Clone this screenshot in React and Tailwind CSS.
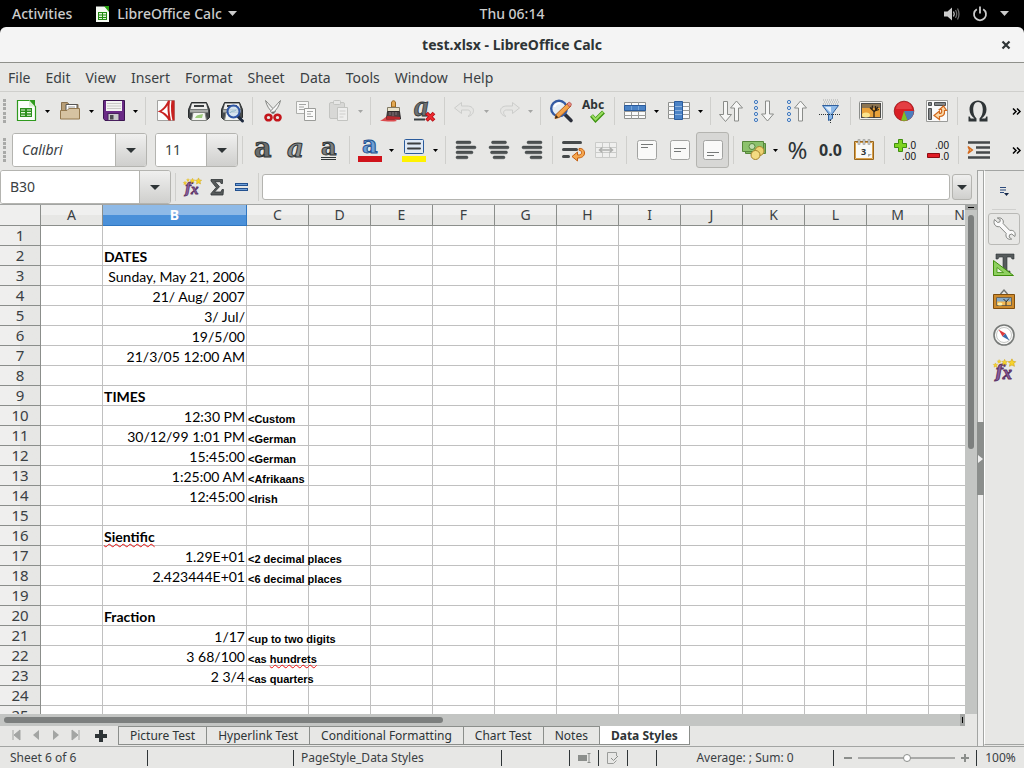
import React from 'react';

/* ---------- shared pieces ---------- */

const Svg = ({ w = 24, h = 24, children, className = '' }) => (
  <svg width={w} height={h} viewBox={`0 0 ${w} ${h}`} className={`shrink-0 overflow-visible ${className}`} aria-hidden="true">
    {children}
  </svg>
);

const Tool = ({ label, active, children }) => (
  <button
    type="button"
    aria-label={label}
    className={
      active
        ? 'flex h-9 w-[33px] shrink-0 items-center justify-center rounded-[3px] border border-[#b4b4b0] bg-[#d7d7d5]'
        : 'flex h-9 w-[33px] shrink-0 items-center justify-center'
    }
  >
    {children}
  </button>
);

const Caret = ({ label, dim }) => (
  <button type="button" aria-label={label} className="flex h-9 w-[11px] shrink-0 items-center justify-center">
    <Svg w={5} h={3}>
      <path d="M0 0h5L2.5 3z" fill={dim ? '#a5a6a4' : '#000'} />
    </Svg>
  </button>
);

const Sep = () => (
  <span className="flex h-9 w-2 shrink-0 items-center justify-center">
    <span className="h-7 w-px bg-[#cfcfcc]" />
  </span>
);

const Grip = () => (
  <span className="flex h-6 w-[3px] shrink-0 flex-col justify-between">
    {[0, 1, 2, 3, 4, 5].map((i) => (
      <span key={i} className="h-[3px] w-[3px] bg-[#a9aaa8]" />
    ))}
  </span>
);

const More = () => (
  <button type="button" aria-label="More tools" className="ml-auto flex h-9 w-4 shrink-0 items-center justify-center">
    <Svg w={9} h={7}>
      <path d="M1 .5l3 3-3 3M5 .5l3 3-3 3" fill="none" stroke="#000" strokeWidth="1.500" />
    </Svg>
  </button>
);

const DropArrow = () => (
  <Svg w={10} h={5}>
    <path d="M0 0h10L5 5z" fill="#2e3436" />
  </Svg>
);

/* ---------- standard toolbar icons ---------- */

const NewDoc = () => (
  <Svg>
    <path d="M3.5 1.5h12l6 6v14h-18z" fill="#fcfdfb" stroke="#2f9a1e" strokeWidth="1.2" />
    <path d="M14.5 1h6.5v6.5z" fill="#2f9a1e" />
    <path d="M15 1l6 6.5h-6z" fill="#d9efd2" />
    <rect x="6" y="9" width="12" height="9" fill="#2c8f1c" />
    <path d="M7 10.5h4v1h-4zM13 10.5h4v1h-4zM7 13h4v1.3h-4zM13 13h4v1.3h-4zM7 15.7h4v1h-4zM13 15.7h4v1h-4z" fill="#e6f5e0" />
  </Svg>
);

const OpenFolder = () => (
  <Svg>
    <path d="M3.5 7V3.5h6l1.500 2h9V17h-16.500z" fill="#b89f78" stroke="#8a7250" />
    <path d="M8 5.500h11v8H8z" fill="#fff" stroke="#555" />
    <path d="M10 8h7M10 10h7" stroke="#999" />
    <path d="M2.500 11.500h6.500l2-2h10.500v10.500h-19z" fill="#d6c3a2" stroke="#94794f" />
  </Svg>
);

const Save = () => (
  <Svg>
    <path d="M1.500 1.500h21v20h-19.500l-1.500-2z" fill="#6a2a86" stroke="#3b1450" />
    <rect x="4" y="2" width="16" height="10" fill="#f3f3f1" />
    <path d="M5 4.500h14M5 7h14M5 9.500h14" stroke="#c9c9c6" />
    <rect x="6" y="14.500" width="11" height="7" fill="#c9c9cb" stroke="#49205e" />
    <rect x="8" y="16" width="3.500" height="4.500" fill="#4b4b4f" />
  </Svg>
);

const Pdf = () => (
  <Svg>
    <path d="M3.500 1.500h17v20h-17z" fill="#fbfbfb" stroke="#a3a3a1" />
    <path d="M17.500 1.500h3v20h-2c-1.500-6-2-13-1-20z" fill="#c8201f" />
    <path d="M3.500 12.500C8 11 11.500 7 14 1.500h2c-1 7-.5 13 1 20h-2.500C12 17 8 13.500 3.500 12.500z" fill="#c8201f" />
    <path d="M7.500 12.200c2.500-1.200 4.500-3.200 6-6-.1 3.800.1 7.300.7 11-1.700-2.300-4-4-6.700-5z" fill="#fff" />
  </Svg>
);

const PrinterBody = () => (
  <>
    <path d="M4.500 3.500h15l3 7v8l-2 2h-17l-2-2v-8z" fill="#45494b" stroke="#2a2d2e" />
    <path d="M5 4.500h14l1.500 5.500h-17z" fill="#eeeeec" />
    <path d="M7 6h10v2H7z" fill="#3b3e40" />
    <path d="M3 10.500h18v3H3z" fill="#a9aca9" />
    <path d="M6 13.500h12l1.500 8h-15z" fill="#f4f6f3" stroke="#828581" />
  </>
);

const Print = () => (
  <Svg>
    <PrinterBody />
    <path d="M8 19c2-4 5-3 8-4l-1 4z" fill="#9ccb7c" />
  </Svg>
);

const Preview = () => (
  <Svg>
    <PrinterBody />
    <path d="M18 17.500l4.500 4.500" stroke="#1e2a3f" strokeWidth="3" strokeLinecap="round" />
    <circle cx="13.500" cy="12.500" r="6" fill="#cfe0ee" fillOpacity=".85" stroke="#2f56a5" strokeWidth="2" />
    <path d="M10 14c2-3 4-1 6-3" stroke="#89b6c9" fill="none" />
  </Svg>
);

const Cut = () => (
  <Svg>
    <path d="M4.500 1.500c1 5 4 10 8.500 13l1.500-2.500C11 9 8 5 4.500 1.500z" fill="#f1f1f0" stroke="#858784" />
    <path d="M19.500 1.500c-1 5-4 10-8.500 13l-1.500-2.500C13 9 16 5 19.500 1.500z" fill="#f8f8f8" stroke="#858784" />
    <ellipse cx="7.500" cy="18.500" rx="3" ry="2.800" fill="none" stroke="#c4161c" strokeWidth="2.600" />
    <ellipse cx="16.500" cy="18.500" rx="3" ry="2.800" fill="none" stroke="#c4161c" strokeWidth="2.600" />
    <circle cx="12" cy="13.500" r="1" fill="#666" />
  </Svg>
);

const Copy = () => (
  <Svg>
    <path d="M2.500 2.500h12v12h-12z" fill="#f7f7f6" stroke="#adaeab" />
    <path d="M5 5.500h7M5 8h5M5 10.500h6" stroke="#a4a5a3" />
    <path d="M10.500 9.500h11v12h-11z" fill="#fbfbfa" stroke="#9b9c99" />
    <path d="M13 12.500h6M13 15h4M13 17.500h6" stroke="#a4a5a3" />
  </Svg>
);

const Paste = () => (
  <Svg>
    <rect x="2.500" y="3.500" width="15" height="16" rx="1.500" fill="#d8d8d6" stroke="#c3c4c1" />
    <rect x="6.500" y="1.500" width="7" height="4" rx="1" fill="#e6e6e5" stroke="#c3c4c1" />
    <path d="M10.500 8.500h10v13h-10z" fill="#eeeeed" stroke="#c3c4c1" />
    <path d="M12.500 12h6M12.500 15h6M12.500 18h4" stroke="#cececc" />
  </Svg>
);

const Brush = () => (
  <Svg>
    <path d="M1 21.500c4-1 5-4 9-5l8 5.500c-5 1-12 .5-17-.5z" fill="#dc4a4d" />
    <path d="M12.500 8V4c0-3 4-3 4 0v4z" fill="#e3a953" stroke="#96641b" />
    <path d="M8.500 8.500h12v4h-12z" fill="#e9e3cb" stroke="#817a65" />
    <path d="M8.500 12.500h12l1 7.500h-14z" fill="#4d4143" stroke="#2e2829" />
    <path d="M8 17l13 1v2.500H7z" fill="#b8282c" />
    <path d="M11 13v3M14 13v4M17 13v3" stroke="#85777a" />
  </Svg>
);

const ClearFormat = () => (
  <Svg>
    <text x="2" y="17" fontSize="29" fontStyle="italic" fontWeight="bold" fontFamily="Liberation Serif, serif" fill="#6d7171" stroke="#2e3436" strokeWidth=".8">a</text>
    <path d="M2 20.500h11" stroke="#3b4042" strokeWidth="2" />
    <path d="M14.500 14l7.500 7.500M22 14l-7.500 7.500" stroke="#b40e14" strokeWidth="3.800" />
    <path d="M15 14.500l6.500 6.500M21.500 14.500L15 21" stroke="#ef2b31" strokeWidth="2" />
  </Svg>
);

const Undo = ({ flip }) => (
  <Svg>
    <path
      transform={flip ? 'translate(24 0) scale(-1 1)' : undefined}
      d="M8.500 3.500L1.500 9l7 5.500V11h6c3.500 0 4 4 .5 6.500 7-1.500 8-10.500-1-10.500H8.500z"
      fill="#e5e5e3"
      stroke="#cccdcb"
    />
  </Svg>
);

const Find = () => (
  <Svg>
    <path d="M15 14.500l7 7" stroke="#2b2f3a" strokeWidth="3.600" strokeLinecap="round" />
    <circle cx="10" cy="9.500" r="7.800" fill="#e5edf4" stroke="#335aa3" strokeWidth="2.400" />
    <path d="M5.500 8a5 5 0 016-3.500" stroke="#fff" strokeWidth="2" fill="none" />
    <path d="M6 19.500l1-4L19 4l3 3L10 18.500z" fill="#f3a34b" stroke="#b5611a" />
    <path d="M18 5l1.500-1.500c1-1 4 1.500 2.500 3L20.500 8z" fill="#e88980" stroke="#a74943" strokeWidth=".7" />
    <path d="M6 19.500l1-3.500 2.500 2.500z" fill="#3b2c1c" />
  </Svg>
);

const Spell = () => (
  <Svg w={26}>
    <text x="1" y="10" fontSize="12" fontWeight="bold" fontFamily="Noto Sans, sans-serif" fill="#2e3436">Abc</text>
    <path d="M10.500 16.500l4 4.500 8-8" fill="none" stroke="#3e9410" strokeWidth="4" />
    <path d="M11 16.500l3.500 4 7.500-7.500" fill="none" stroke="#9bdd61" strokeWidth="2" />
  </Svg>
);

const RowTable = () => (
  <Svg>
    <path d="M1.500 3.500h21v16h-21z" fill="#fafafa" stroke="#8d8f8d" />
    <path d="M8.500 3v17M15.500 3v17M1 12.500h22M1 16.500h22" stroke="#9a9c9a" />
    <path d="M1.500 6.500h21v5h-21z" fill="#4b83c6" stroke="#2a5b9c" />
    <path d="M8.500 7v4M15.500 7v4" stroke="#77a5da" />
  </Svg>
);

const ColTable = () => (
  <Svg>
    <path d="M1.500 3.500h21v16h-21z" fill="#fafafa" stroke="#8d8f8d" />
    <path d="M1 7.500h22M1 11.500h22M1 15.500h22" stroke="#9a9c9a" />
    <path d="M7.500 2.500h8v18h-8z" fill="#4b83c6" stroke="#2a5b9c" />
    <path d="M8 7.500h7M8 11.500h7M8 15.500h7" stroke="#8fb4e0" />
  </Svg>
);

const down = 'M-2 0h4v13h4L0 20l-6-7h4z';
const up = 'M-2 20h4V7h4L0 0l-6 7h4z';
const arrowStyle = { fill: '#f6f6f5', stroke: '#8a8c89', strokeWidth: 1 };

const Sort = () => (
  <Svg w={26}>
    <path d={down} transform="translate(7.500 2.500)" {...arrowStyle} />
    <path d={up} transform="translate(18.500 2)" {...arrowStyle} />
  </Svg>
);

const SortDir = ({ desc }) => (
  <Svg>
    {[3, 9, 15, 21].map((y) => (
      <circle key={y} cx="4" cy={y} r="1.600" fill="#dce8f5" stroke="#4078bd" />
    ))}
    <path d={desc ? up : down} transform="translate(15.500 2)" {...arrowStyle} />
  </Svg>
);

const Filter = () => (
  <Svg>
    <path d="M5 1h15M6 3h15M5 5h15" stroke="#a9aba9" strokeDasharray="1 1" />
    <path d="M4.500 6.500h16l-6 8v5l-4 2v-7z" fill="#8db9e8" stroke="#2f609f" />
    <path d="M7 8h6v6z" fill="#e2eefa" />
    <path d="M1 15.500h22M12.500 21v3" stroke="#2e3436" strokeDasharray="1 1" />
  </Svg>
);

const Picture = () => (
  <Svg w={26}>
    <rect x="1.500" y="2.500" width="23" height="18" rx="1" fill="#f2f2f0" stroke="#8b8d8a" />
    <rect x="3.500" y="4.500" width="19" height="14" fill="#e9a23a" stroke="#4b4b49" />
    <path d="M4 5h18v4H4z" fill="#8c7552" />
    <ellipse cx="8" cy="16" rx="4" ry="2.500" fill="#fbe48d" />
    <path d="M16 18.500v-6l-4-4M16 13l4-5M14 10l.5-3.500M17.500 10.500V7M18 11.500l3-1" stroke="#2e2417" strokeWidth="1.300" fill="none" />
  </Svg>
);

const Chart = () => (
  <Svg>
    <circle cx="12" cy="12" r="9.800" fill="#d81e24" stroke="#951014" strokeWidth=".8" />
    <path d="M12 12h9.800a9.800 9.800 0 01-6.300 9.200z" fill="#4c7dbd" />
    <path d="M12 12l3.500 9.200a10 10 0 01-6.500.2z" fill="#7cc32a" />
    <path d="M4 10a8 7 0 0116 0" fill="#f3666a" opacity=".45" />
  </Svg>
);

const Pivot = () => (
  <Svg>
    <path d="M1.500 1.500h21v21h-21z" fill="#fafafa" stroke="#9a9b99" />
    <path d="M3.500 3.500h3v3h-3zM9.500 3.500h11v3h-11zM3.500 9.500h3v11h-3z" fill="#85888a" stroke="#4d5052" />
    <path d="M14.500 10.500l4-3.500 3 4.500h-2c.5 4.500-1.500 6-5 6v3l-5.500-4 5.500-4.500v2.500c2 0 2.500-1 2-4z" fill="#fbd9a8" stroke="#d2691e" strokeWidth="1.200" />
  </Svg>
);

const Omega = () => (
  <Svg>
    <path d="M2.500 22.500v-5h1.200l1 2h3.800c-3-2.200-5-5-5-9C3.500 5 7 1.500 12 1.500s8.500 3.500 8.500 9c0 4-2 6.800-5 9h3.800l1-2h1.200v5h-8v-3c2.200-2 3.300-5 3.300-9 0-4-1.600-7.500-4.800-7.500S7.200 6.500 7.200 10.500c0 4 1.100 7 3.300 9v3z" fill="#2e3436" />
  </Svg>
);

/* ---------- formatting toolbar icons ---------- */

const LetterA = ({ variant }) => (
  <Svg>
    {variant === 'bold' && (
      <text x="3" y="19" fontSize="27" fontWeight="bold" fontFamily="DejaVu Serif, serif" fill="#6a6d6d" stroke="#2e3436">a</text>
    )}
    {variant === 'italic' && (
      <text x="3" y="19" fontSize="26" fontStyle="italic" fontWeight="bold" fontFamily="DejaVu Serif, serif" fill="#8a8d8d" stroke="#2e3436">a</text>
    )}
    {variant === 'underline' && (
      <>
        <text x="4" y="17" fontSize="24" fontWeight="bold" fontFamily="DejaVu Serif, serif" fill="#7c7f7f" stroke="#2e3436">a</text>
        <path d="M4 19.500h15M4 21.500h15" stroke="#2e3436" strokeWidth="1.200" />
      </>
    )}
  </Svg>
);

const FontColor = () => (
  <Svg>
    <text x="4" y="15" fontSize="24" fontWeight="bold" fontFamily="DejaVu Serif, serif" fill="#6d9fd6" stroke="#23518f">a</text>
    <rect y="18" width="24" height="6" fill="#d0131b" />
  </Svg>
);

const Highlight = () => (
  <Svg>
    <rect x="2.500" y="1.500" width="19" height="14" rx="1" fill="#dfe9f5" stroke="#2a5b9c" />
    <path d="M6 5.500h12M6 10.500h12" stroke="#3b3e40" strokeWidth="2" strokeLinecap="round" />
    <rect y="18" width="24" height="6" fill="#fff200" />
  </Svg>
);

const Align = ({ side }) => {
  const widths = [15, 20, 17, 12];
  return (
    <Svg>
      {widths.map((w, i) => {
        const x = side === 'left' ? 2 : side === 'right' ? 22 - w : 12 - w / 2;
        return <rect key={i} x={x} y={3 + i * 5} width={w} height="2.800" rx="1.400" fill="#4d5152" stroke="#2e3436" strokeWidth=".4" />;
      })}
    </Svg>
  );
};

const Wrap = () => (
  <Svg>
    <rect x="1" y="3" width="20" height="3" rx="1.500" fill="#45494a" />
    <rect x="1" y="10" width="16" height="3" rx="1.500" fill="#45494a" />
    <rect x="1" y="17" width="8" height="3" rx="1.500" fill="#45494a" />
    <path d="M18 10.500c3-.5 5.500 1.500 5.500 4.500s-2.500 5-7 5v3l-5.500-4.500 5.500-4.500v3c3 0 4-.5 4-2.500 0-1.500-1-2.200-2.500-2.200z" fill="#f6a850" stroke="#c45f11" />
  </Svg>
);

const Merge = () => (
  <Svg>
    <path d="M1.500 4.500h21v15h-21z" fill="#efefee" stroke="#cacbc9" />
    <path d="M8.500 4v5M15.500 4v5M8.500 15v5M15.500 15v5M1 9.500h22M1 14.500h22" stroke="#cacbc9" />
    <path d="M6 12h12M8.500 9.500L5.500 12l3 2.500M15.500 9.500l3 2.500-3 2.500" stroke="#adaeac" strokeWidth="1.500" fill="none" />
  </Svg>
);

const VAlign = ({ at }) => {
  const y = at === 'top' ? 6.5 : at === 'middle' ? 10.5 : 14.5;
  return (
    <Svg>
      <rect x="2.500" y="2.500" width="19" height="19" rx="2" fill="#f9f9f8" stroke="#a2a3a1" />
      <path d={`M6 ${y}h12M6 ${y + 3}h7`} stroke="#757877" />
    </Svg>
  );
};

const Money = () => (
  <Svg>
    <path d="M3.500 5.500h20v10h-20z" fill="#7fb660" stroke="#56873b" />
    <path d="M.5 3.500h21v10H.5z" fill="#8dc26d" stroke="#56873b" />
    <circle cx="10" cy="8.500" r="3" fill="#c3deb2" stroke="#56873b" />
    <circle cx="17.500" cy="13" r="4.500" fill="#edd272" stroke="#a5832c" />
    <circle cx="13.500" cy="17" r="4.500" fill="#f3db82" stroke="#a5832c" />
  </Svg>
);

const Percent = () => (
  <span className="font-['Noto_Sans',sans-serif] text-2xl leading-6 text-[#2e3436]">%</span>
);

const Decimal = () => (
  <span className="font-['Noto_Sans',sans-serif] text-base font-bold leading-6 text-[#2e3436]">0.0</span>
);

const DateIcon = () => (
  <Svg>
    <path d="M2.500 3.500h19v18h-19z" fill="#f9f9f7" stroke="#9a661b" strokeWidth="1" />
    <path d="M3.500 4.500h17v16h-17z" fill="none" stroke="#d9a04a" />
    <path d="M7 1.500v5M12 1.500v5M17 1.500v5" stroke="#777977" strokeWidth="2.500" />
    <path d="M7 2v4M12 2v4M17 2v4" stroke="#fff" />
    <text x="9" y="17" fontSize="9" fontWeight="bold" fontFamily="Noto Sans, sans-serif" fill="#2e3436">3</text>
    <path d="M16 19v-3h4z" fill="#a9aba8" />
  </Svg>
);

const DecimalStep = ({ add }) => (
  <Svg>
    {add ? (
      <path d="M5.500 1.500h4v4h4v4h-4v4h-4v-4h-4v-4h4z" fill="#7ed321" stroke="#3f8e0d" />
    ) : (
      <path d="M1.500 15.500h12v4h-12z" fill="#e01b24" stroke="#8d0c12" />
    )}
    <text x="23" y="11" fontSize="10" textAnchor="end" fontFamily="Liberation Sans, sans-serif" fill="#111">{add ? '.0' : '.00'}</text>
    <text x="23" y="22" fontSize="10" textAnchor="end" fontFamily="Liberation Sans, sans-serif" fill="#111">{add ? '.00' : '.0'}</text>
  </Svg>
);

const Indent = () => (
  <Svg>
    <path d="M1 4.500h22M9 9.500h14M9 14.500h14M1 19.500h22" stroke="#45494a" strokeWidth="2.600" />
    <path d="M1 8.500l4.500 3.500-4.500 3.500 1.500-3.500z" fill="#f6a850" stroke="#d2691e" strokeWidth="1.200" />
  </Svg>
);

/* ---------- formula bar and sidebar icons ---------- */

const star = 'M0-2.600l.8 1.700 1.800.2-1.300 1.300.4 1.900L0 1.600l-1.700.9.400-1.900-1.300-1.300 1.800-.2z';

const Fx = ({ w = 18 }) => (
  <svg width={w} height={w} viewBox="0 0 18 18" className="shrink-0 overflow-visible" aria-hidden="true">
    <text x="2" y="15" fontSize="14" fontStyle="italic" fontWeight="bold" fontFamily="DejaVu Serif, serif" fill="#8e5fa0" stroke="#5c3566" strokeWidth=".8">f</text>
    <text x="8" y="16" fontSize="15" fontStyle="italic" fontWeight="bold" fontFamily="Liberation Serif, serif" fill="#8e5fa0" stroke="#5c3566" strokeWidth=".8">x</text>
    <g fill="#f6d32d" stroke="#cda013" strokeWidth=".4">
      <path d={star} transform="translate(2 5) scale(.7)" />
      <path d={star} transform="translate(5 2) scale(.6)" />
      <path d={star} transform="translate(9.500 2.600) scale(.9)" />
      <path d={star} transform="translate(15.500 3) scale(1.200)" />
    </g>
  </svg>
);

const Sigma = () => (
  <Svg w={16} h={18}>
    <path d="M2 1.500h11.500v4H12l-.7-1.800H6l4.500 5L5.500 14H12l1-2.500h1.500L14 17H2v-1.500L7.200 9.500 2 3z" fill="#565a5a" stroke="#2e3436" strokeWidth=".8" />
  </Svg>
);

const Equals = () => (
  <Svg w={14} h={10}>
    <rect x=".5" y="1.500" width="12" height="2" fill="#6fa0da" stroke="#23518f" />
    <rect x=".5" y="6.500" width="12" height="2" fill="#6fa0da" stroke="#23518f" />
  </Svg>
);

const Wrench = () => (
  <Svg>
    <path d="M2.500 2.500l3.200 3 2.200-.6.400-2.300-3-1.600c3.500-1 7 1.500 5.800 5.500l6.700 7c3.500-1 6.500 2 5 6l-3-2.500-2.300.8-.4 2.300 2.600 2c-4 1-6.600-1.800-5.500-5.700L7.500 9.600C3.800 10.500.8 7 2.500 2.500z" fill="#fafafa" stroke="#858784" />
  </Svg>
);

const Styles = () => (
  <Svg>
    <path d="M4 1h18v5h-2l-1-2h-4v14h3v2H8v-2h3V4H7L6 6H4z" fill="#555a5b" stroke="#2e3436" strokeWidth=".6" />
    <path d="M1.500 7.500v15h20z" fill="#8fd060" stroke="#3f8e0d" />
    <path d="M5 14.500v5h6.500z" fill="#e8f5df" stroke="#3f8e0d" strokeWidth=".8" />
  </Svg>
);

const Gallery = () => (
  <Svg>
    <path d="M8.500 6l3.500-4 3.500 4" fill="none" stroke="#707371" strokeWidth="1.400" />
    <path d="M1.500 6.500h21v14h-21z" fill="#cd8a2c" stroke="#7f4d0e" />
    <path d="M4.500 9.500h15v8h-15z" fill="#f4b955" stroke="#6f6551" />
    <path d="M5 10h14v3.500H5z" fill="#86aac9" />
    <ellipse cx="8" cy="16" rx="2.500" ry="1.500" fill="#fff3a8" />
    <path d="M14 17.500v-4l-2.500-2.500M14 14l3-3.500" stroke="#3a2d1a" fill="none" />
  </Svg>
);

const Compass = () => (
  <Svg>
    <circle cx="12" cy="12" r="10" fill="#f7f7f6" stroke="#777a78" strokeWidth="1.600" />
    <circle cx="12" cy="12" r="7.500" fill="#fff" stroke="#c6c8c5" />
    <path d="M6.500 6.500l7 4-3 3z" fill="#dd3b3f" />
    <path d="M17.500 17.500l-7-4 3-3z" fill="#3b6dac" />
  </Svg>
);

/* ---------- data ---------- */

const menus = ['File', 'Edit', 'View', 'Insert', 'Format', 'Sheet', 'Data', 'Tools', 'Window', 'Help'];
const columns = ['A', 'B', 'C', 'D', 'E', 'F', 'G', 'H', 'I', 'J', 'K', 'L', 'M', 'N'];

const cells = {
  2: { head: 'DATES' },
  3: { value: 'Sunday, May 21, 2006' },
  4: { value: '21/ Aug/ 2007' },
  5: { value: '3/ Jul/' },
  6: { value: '19/5/00' },
  7: { value: '21/3/05 12:00 AM' },
  9: { head: 'TIMES' },
  10: { value: '12:30 PM', note: '<Custom' },
  11: { value: '30/12/99 1:01 PM', note: '<German' },
  12: { value: '15:45:00', note: '<German' },
  13: { value: '1:25:00 AM', note: '<Afrikaans' },
  14: { value: '12:45:00', note: '<Irish' },
  16: { head: 'Sientific', misspelt: true },
  17: { value: '1.29E+01', note: '<2 decimal places' },
  18: { value: '2.423444E+01', note: '<6 decimal places' },
  20: { head: 'Fraction' },
  21: { value: '1/17', note: '<up to two digits' },
  22: { value: '3 68/100', note: '<as ', wrong: 'hundrets' },
  23: { value: '2 3/4', note: '<as quarters' },
};

const sheets = ['Picture Test', 'Hyperlink Test', 'Conditional Formatting', 'Chart Test', 'Notes', 'Data Styles'];

/* ---------- regions ---------- */

const TopBar = () => (
  <header className="grid h-[27px] shrink-0 grid-cols-3 items-center bg-black px-3 text-sm font-medium text-[#cccccc]">
    <div className="flex items-center gap-[23px]">
      <button type="button">Activities</button>
      <button type="button" className="flex items-center gap-1.5 whitespace-nowrap">
        <Svg w={16} h={16}>
          <path d="M1 .5h9l4 4V16H1z" fill="#f5faf3" />
          <path d="M9 0h5v6z" fill="#28a010" />
          <path d="M3 6h9v8H3z" fill="#228b12" />
          <path d="M4 7h3v1.500H4zM8 7h3v1.500H8zM4 9.500h3V11H4zM8 9.500h3V11H8zM4 12h3v1H4zM8 12h3v1H8z" fill="#dff3d8" />
        </Svg>
        <span>LibreOffice Calc</span>
        <Svg w={9} h={5}>
          <path d="M0 0h9L4.500 5z" fill="#ccc" />
        </Svg>
      </button>
    </div>
    <div className="text-center">Thu 06:14</div>
    <div className="flex items-center justify-end gap-3 pr-[3px]">
      <button type="button" aria-label="Volume">
        <Svg w={17} h={16}>
          <path d="M1 5.500h3.500L9 1.500v13l-4.500-4H1z" fill="#ccc" />
          <path d="M10.500 5.500q1.500 2.500 0 5" stroke="#ccc" strokeWidth="1.300" fill="none" />
          <path d="M12.500 4q2.400 4 0 8M14.500 2.500q3 5.500 0 11" stroke="#6b6b6b" strokeWidth="1.300" fill="none" />
        </Svg>
      </button>
      <button type="button" aria-label="Power">
        <Svg w={16} h={16}>
          <path d="M4.800 3.200a6 6 0 106.400 0" fill="none" stroke="#ccc" strokeWidth="1.800" />
          <path d="M8 .5v7" stroke="#ccc" strokeWidth="1.800" />
        </Svg>
      </button>
      <button type="button" aria-label="System menu">
        <Svg w={9} h={5}>
          <path d="M0 0h9L4.500 5z" fill="#ccc" />
        </Svg>
      </button>
    </div>
  </header>
);

const TitleBar = () => (
  <div className="shrink-0 bg-black">
    <div className="grid h-9 grid-cols-[40px_1fr_40px] items-center rounded-t-md border-b border-[#8f908b] bg-[#f4f4f4] text-[#2e3436]">
      <span />
      <h1 className="text-center text-sm font-bold">test.xlsx - LibreOffice Calc</h1>
      <button type="button" aria-label="Close" className="flex justify-center pl-1">
        <Svg w={8} h={8}>
          <path d="M.5.5l7 7M7.500.5l-7 7" stroke="#2e3436" strokeWidth="2.200" />
        </Svg>
      </button>
    </div>
  </div>
);

const MenuBar = () => (
  <nav aria-label="Menu" className="flex h-[29px] shrink-0 items-center gap-[15px] border-b border-[#cfcfcc] px-2 pt-px text-sm text-[#3a4043]">
    {menus.map((m) => (
      <button key={m} type="button">{m}</button>
    ))}
  </nav>
);

const StandardBar = () => (
  <div role="toolbar" aria-label="Standard" className="flex h-[38px] shrink-0 items-center overflow-hidden pl-[3px]">
    <Grip />
    <span className="w-[3px] shrink-0" />
    <Tool label="New"><NewDoc /></Tool>
    <Caret label="New options" />
    <Tool label="Open"><OpenFolder /></Tool>
    <Caret label="Recent files" />
    <Tool label="Save"><Save /></Tool>
    <Caret label="Save options" />
    <Sep />
    <Tool label="Export as PDF"><Pdf /></Tool>
    <Tool label="Print"><Print /></Tool>
    <Tool label="Print preview"><Preview /></Tool>
    <Sep />
    <Tool label="Cut"><Cut /></Tool>
    <Tool label="Copy"><Copy /></Tool>
    <Tool label="Paste"><Paste /></Tool>
    <Caret label="Paste options" dim />
    <Sep />
    <Tool label="Clone formatting"><Brush /></Tool>
    <Tool label="Clear formatting"><ClearFormat /></Tool>
    <Sep />
    <Tool label="Undo"><Undo /></Tool>
    <Caret label="Undo history" dim />
    <Tool label="Redo"><Undo flip /></Tool>
    <Caret label="Redo history" dim />
    <Sep />
    <Tool label="Find and replace"><Find /></Tool>
    <Tool label="Spelling"><Spell /></Tool>
    <Sep />
    <Tool label="Row"><RowTable /></Tool>
    <Caret label="Row options" />
    <Tool label="Column"><ColTable /></Tool>
    <Caret label="Column options" />
    <Sep />
    <Tool label="Sort"><Sort /></Tool>
    <Tool label="Sort ascending"><SortDir /></Tool>
    <Tool label="Sort descending"><SortDir desc /></Tool>
    <Tool label="AutoFilter"><Filter /></Tool>
    <Sep />
    <Tool label="Image"><Picture /></Tool>
    <Tool label="Chart"><Chart /></Tool>
    <Tool label="Pivot table"><Pivot /></Tool>
    <Sep />
    <Tool label="Special character"><Omega /></Tool>
    <More />
  </div>
);

const Combo = ({ label, value, box, input, button }) => (
  <div className={`flex h-[34px] shrink-0 overflow-hidden rounded-[3px] border border-[#b4b4b0] bg-white ${box}`}>
    <input aria-label={label} defaultValue={value} className={`min-w-0 flex-1 bg-white pl-[9px] text-sm text-[#3a4043] outline-none ${input}`} />
    <button
      type="button"
      aria-label={`${label} list`}
      className={`flex shrink-0 items-center justify-center border-l border-[#b4b4b0] bg-linear-to-b from-[#f0f0ef] to-[#cfcfcd] ${button}`}
    >
      <DropArrow />
    </button>
  </div>
);

const FormatBar = () => (
  <div role="toolbar" aria-label="Formatting" className="flex h-10 shrink-0 items-center overflow-hidden pl-[3px]">
    <Grip />
    <span className="w-1.5 shrink-0" />
    <Combo label="Font name" value="Calibri" box="w-[135px]" input="italic" button="w-[31px]" />
    <span className="w-2 shrink-0" />
    <Combo label="Font size" value="11" box="w-[83px]" input="" button="w-[31px]" />
    <Sep />
    <Tool label="Bold"><LetterA variant="bold" /></Tool>
    <Tool label="Italic"><LetterA variant="italic" /></Tool>
    <Tool label="Underline"><LetterA variant="underline" /></Tool>
    <Sep />
    <Tool label="Font color"><FontColor /></Tool>
    <Caret label="Font color options" />
    <Tool label="Highlighting"><Highlight /></Tool>
    <Caret label="Highlighting options" />
    <Sep />
    <Tool label="Align left"><Align side="left" /></Tool>
    <Tool label="Center"><Align side="center" /></Tool>
    <Tool label="Align right"><Align side="right" /></Tool>
    <Sep />
    <Tool label="Wrap text"><Wrap /></Tool>
    <Tool label="Merge cells"><Merge /></Tool>
    <Sep />
    <Tool label="Align top"><VAlign at="top" /></Tool>
    <Tool label="Center vertically"><VAlign at="middle" /></Tool>
    <Tool label="Align bottom" active><VAlign at="bottom" /></Tool>
    <Sep />
    <Tool label="Currency"><Money /></Tool>
    <Caret label="Currency options" />
    <Tool label="Percent"><Percent /></Tool>
    <Tool label="Number"><Decimal /></Tool>
    <Tool label="Date"><DateIcon /></Tool>
    <Sep />
    <Tool label="Add decimal place"><DecimalStep add /></Tool>
    <Tool label="Delete decimal place"><DecimalStep /></Tool>
    <Sep />
    <Tool label="Increase indent"><Indent /></Tool>
    <More />
  </div>
);

const FormulaBar = () => (
  <div className="flex h-[34px] shrink-0 items-center">
    <Combo label="Name box" value="B30" box="w-[171px]" input="" button="w-[31px]" />
    <Sep />
    <button type="button" aria-label="Function wizard" className="flex h-7 w-[25px] shrink-0 items-center justify-center"><Fx /></button>
    <button type="button" aria-label="Sum" className="flex h-7 w-[25px] shrink-0 items-center justify-center"><Sigma /></button>
    <button type="button" aria-label="Formula" className="flex h-7 w-[25px] shrink-0 items-center justify-center"><Equals /></button>
    <Sep />
    <input aria-label="Input line" defaultValue="" className="h-[26px] min-w-0 flex-1 rounded-[3px] border border-[#b4b4b0] bg-white px-2 text-sm outline-none" />
    <button
      type="button"
      aria-label="Expand formula bar"
      className="mr-[5px] ml-0.5 flex h-[26px] w-5 shrink-0 items-center justify-center rounded-[3px] border border-[#b4b4b0] bg-linear-to-b from-[#f0f0ef] to-[#cfcfcd]"
    >
      <DropArrow />
    </button>
  </div>
);

const rowHead =
  'h-5 border-r border-b border-[#8b8e8b] bg-linear-to-r from-[#efefee] from-50% to-[#e7e7e5] to-50% p-0 text-center text-[15px] leading-[19px] font-normal';
const cell = 'h-5 border-r border-b border-[#c0c0c0] p-0 whitespace-nowrap';

const Grid = () => (
  <div className="min-h-0 min-w-0 flex-1 overflow-hidden bg-white">
    <table className="w-[991px] table-fixed border-separate border-spacing-0 text-[#3a4043]">
      <colgroup>
        <col className="w-[41px]" />
        {columns.map((c) => (
          <col key={c} className={c === 'B' ? 'w-36' : 'w-[62px]'} />
        ))}
      </colgroup>
      <thead>
        <tr>
          <td className="h-[21px] border-r border-b border-[#8b8e8b] bg-[#efefee] p-0" />
          {columns.map((c) => (
            <th
              key={c}
              scope="col"
              className={
                c === 'B'
                  ? 'h-[21px] border-r border-b border-[#2f76c0] bg-linear-to-b from-[#8fbae7] from-50% to-[#4a90d9] to-50% p-0 text-sm leading-5 font-bold text-white'
                  : 'h-[21px] border-r border-b border-[#8b8e8b] bg-linear-to-b from-[#f0f0ef] from-50% to-[#e7e7e5] to-50% p-0 text-sm leading-5 font-normal'
              }
            >
              {c}
            </th>
          ))}
        </tr>
      </thead>
      <tbody>
        {Array.from({ length: 25 }, (_, i) => i + 1).map((n) => {
          const row = cells[n] || {};
          return (
            <tr key={n}>
              <th scope="row" className={rowHead}>{n}</th>
              {columns.map((c) => {
                if (c === 'B' && row.head) {
                  return (
                    <td key={c} className={`${cell} pl-px text-left align-bottom font-['Lato',sans-serif] text-sm leading-[17px] font-bold text-black`}>
                      <span className={row.misspelt ? 'underline decoration-[#ee1111] decoration-wavy decoration-1 underline-offset-1' : ''}>{row.head}</span>
                    </td>
                  );
                }
                if (c === 'B' && row.value) {
                  return (
                    <td key={c} className={`${cell} pr-px text-right align-bottom font-['Lato',sans-serif] text-sm leading-[17px] text-black`}>
                      {row.value}
                    </td>
                  );
                }
                if (c === 'C' && row.note) {
                  return (
                    <td key={c} className={`${cell} pl-px text-left align-bottom font-['Liberation_Sans',sans-serif] text-[11px] leading-3 font-bold text-black`}>
                      {row.note}
                      {row.wrong && (
                        <span className="underline decoration-[#ee1111] decoration-wavy decoration-1 underline-offset-1">{row.wrong}</span>
                      )}
                    </td>
                  );
                }
                return <td key={c} className={cell} />;
              })}
            </tr>
          );
        })}
      </tbody>
    </table>
  </div>
);

const TabBar = () => (
  <div className="flex h-5 shrink-0 items-start text-xs text-[#2e3436]">
    <div className="flex h-[18px] w-[84px] items-center justify-between pr-1 pl-3">
      {['M1 0v10M8 0v10L2 5z', 'M8 0v10L2 5z', 'M2 0v10l6-5z', 'M2 0v10l6-5zM9 0v10'].map((d, i) => (
        <button key={i} type="button" aria-label={['First sheet', 'Previous sheet', 'Next sheet', 'Last sheet'][i]}>
          <Svg w={10} h={10}>
            <path d={d} fill="#a3a5a3" stroke="#a3a5a3" strokeWidth={i === 0 || i === 3 ? 1 : 0} />
          </Svg>
        </button>
      ))}
    </div>
    <button type="button" aria-label="Add sheet" className="flex h-5 w-[34px] items-center justify-center">
      <Svg w={12} h={12}>
        <path d="M4 0h4v4h4v4H8v4H4V8H0V4h4z" fill="#2e3436" />
      </Svg>
    </button>
    <div role="tablist" className="flex h-[19px] border-l border-[#8b8e8b]">
      {sheets.map((s) => {
        const on = s === 'Data Styles';
        return (
          <button
            key={s}
            role="tab"
            type="button"
            aria-selected={on}
            className={
              on
                ? 'border-r border-b border-[#8b8e8b] bg-white px-[11px] leading-[17px] font-bold whitespace-nowrap'
                : 'border-t border-r border-b border-[#8b8e8b] px-[11px] leading-4 whitespace-nowrap'
            }
          >
            {s}
          </button>
        );
      })}
    </div>
  </div>
);

const Sidebar = () => (
  <>
    <div className="flex w-[7px] shrink-0 flex-col items-center justify-center border-x border-t border-[#a3a5a3] bg-[#efefee]">
      <button type="button" aria-label="Hide sidebar" className="flex h-[73px] w-[7px] items-center justify-center bg-[#8b8e8c]">
        <Svg w={5} h={8}>
          <path d="M0 0v8l5-4z" fill="#f0f0f0" />
        </Svg>
      </button>
    </div>
    <aside className="mb-px flex w-10 shrink-0 flex-col items-center border-t border-b border-l border-t-[#a3a5a3] border-b-[#a3a5a3] border-l-white pt-1 pr-px">
      <button type="button" aria-label="Sidebar settings" className="flex h-8 w-8 items-center justify-center">
        <Svg w={10} h={10}>
          <path d="M1 1.500h6M1 4h6M1 6.500h4" stroke="#2b4a7c" strokeWidth="1.200" />
          <path d="M5 7h5L7.500 10z" fill="#14284a" />
        </Svg>
      </button>
      <span className="mt-0.5 h-px w-6 bg-[#d0d0ce]" />
      <button type="button" aria-label="Properties" className="mt-[3px] flex h-8 w-8 items-center justify-center rounded-[3px] border border-[#b9b9b6]"><Wrench /></button>
      <div className="mt-1 flex flex-col gap-[3px]">
        <button type="button" aria-label="Styles" className="flex h-8 w-8 items-center justify-center"><Styles /></button>
        <button type="button" aria-label="Gallery" className="flex h-8 w-8 items-center justify-center"><Gallery /></button>
        <button type="button" aria-label="Navigator" className="flex h-8 w-8 items-center justify-center"><Compass /></button>
        <button type="button" aria-label="Functions" className="flex h-8 w-8 items-center justify-center"><Fx w={22} /></button>
      </div>
    </aside>
  </>
);

const StatusBar = () => (
  <footer className="flex h-[22px] shrink-0 items-center border-t border-[#a3a5a3] text-xs text-[#3a4043]">
    <span className="w-[148px] shrink-0 border-r border-[#2e3436] pl-[10px]">Sheet 6 of 6</span>
    <span className="h-4 w-[146px] shrink-0 border-r border-[#2e3436]" />
    <span className="w-52 shrink-0 border-r border-[#2e3436] pl-[7px]">PageStyle_Data Styles</span>
    <span className="h-4 w-[68px] shrink-0 border-r border-[#2e3436]" />
    <span className="flex h-4 w-[29px] shrink-0 items-center justify-center border-r border-[#2e3436]">
      <Svg w={13} h={10}>
        <rect y="2" width="9" height="6" fill="#8b8e8b" />
        <path d="M9.500.5h3M9.500 9.500h3M11 .5v9" stroke="#8b8e8b" />
      </Svg>
    </span>
    <span className="flex h-4 w-[29px] shrink-0 items-center justify-center border-r border-[#2e3436]">
      <Svg w={12} h={12}>
        <path d="M9.500 4V.5h-9v11h6l3-3" fill="none" stroke="#9a9c9a" />
        <path d="M4 6l2.500 2.500L11 4" fill="none" stroke="#8b8e8b" />
      </Svg>
    </span>
    <span className="h-4 w-[29px] shrink-0 border-r border-[#2e3436]" />
    <span className="min-w-0 flex-1 border-r border-[#2e3436] text-center whitespace-nowrap">Average: ; Sum: 0</span>
    <span className="flex h-4 w-[143px] shrink-0 items-center justify-between border-r border-[#2e3436] pr-[7px] pl-[10px]">
      <button type="button" aria-label="Zoom out">
        <Svg w={8} h={8}><path d="M0 4h8" stroke="#8b8e8b" strokeWidth="2" /></Svg>
      </button>
      <input
        type="range"
        aria-label="Zoom"
        defaultValue="50"
        className="h-[9px] w-[97px] appearance-none bg-transparent [&::-webkit-slider-runnable-track]:h-0.5 [&::-webkit-slider-runnable-track]:bg-[#a9aaa8] [&::-webkit-slider-thumb]:-mt-[3px] [&::-webkit-slider-thumb]:h-2 [&::-webkit-slider-thumb]:w-2 [&::-webkit-slider-thumb]:appearance-none [&::-webkit-slider-thumb]:rounded-full [&::-webkit-slider-thumb]:border [&::-webkit-slider-thumb]:border-[#8b8e8b] [&::-webkit-slider-thumb]:bg-white"
      />
      <button type="button" aria-label="Zoom in">
        <Svg w={8} h={8}><path d="M0 4h8M4 0v8" stroke="#8b8e8b" strokeWidth="2" /></Svg>
      </button>
    </span>
    <span className="w-[47px] shrink-0 text-center">100%</span>
  </footer>
);

export default function App() {
  return (
    <div className="flex h-screen flex-col overflow-hidden bg-[#e7e7e5] font-['Noto_Sans',sans-serif]">
      <TopBar />
      <TitleBar />
      <MenuBar />
      <StandardBar />
      <FormatBar />
      <main className="flex min-h-0 flex-1">
        <div className="flex min-w-0 flex-1 flex-col">
          <FormulaBar />
          <div className="flex min-h-0 flex-1 border-t border-[#a3a5a3]">
            <Grid />
            <div className="flex w-3 shrink-0 flex-col items-center bg-[#c3c5c3]">
              <span className="flex h-[5px] w-3 items-center justify-center bg-[#a3a5a3]">
                <span className="h-px w-1.5 bg-black" />
              </span>
              <span className="mt-[5px] h-[234px] w-1.5 rounded-full bg-[#7c7f7e]" />
            </div>
          </div>
          <div className="mr-3 flex h-3 shrink-0 items-center justify-between bg-[#c3c5c3] pl-1">
            <span className="h-1.5 w-[439px] rounded-full bg-[#7c7f7e]" />
            <span className="flex h-3 w-[5px] items-center justify-center bg-[#a3a5a3]">
              <span className="h-1.5 w-px bg-black" />
            </span>
          </div>
          <TabBar />
        </div>
        <Sidebar />
      </main>
      <StatusBar />
    </div>
  );
}
